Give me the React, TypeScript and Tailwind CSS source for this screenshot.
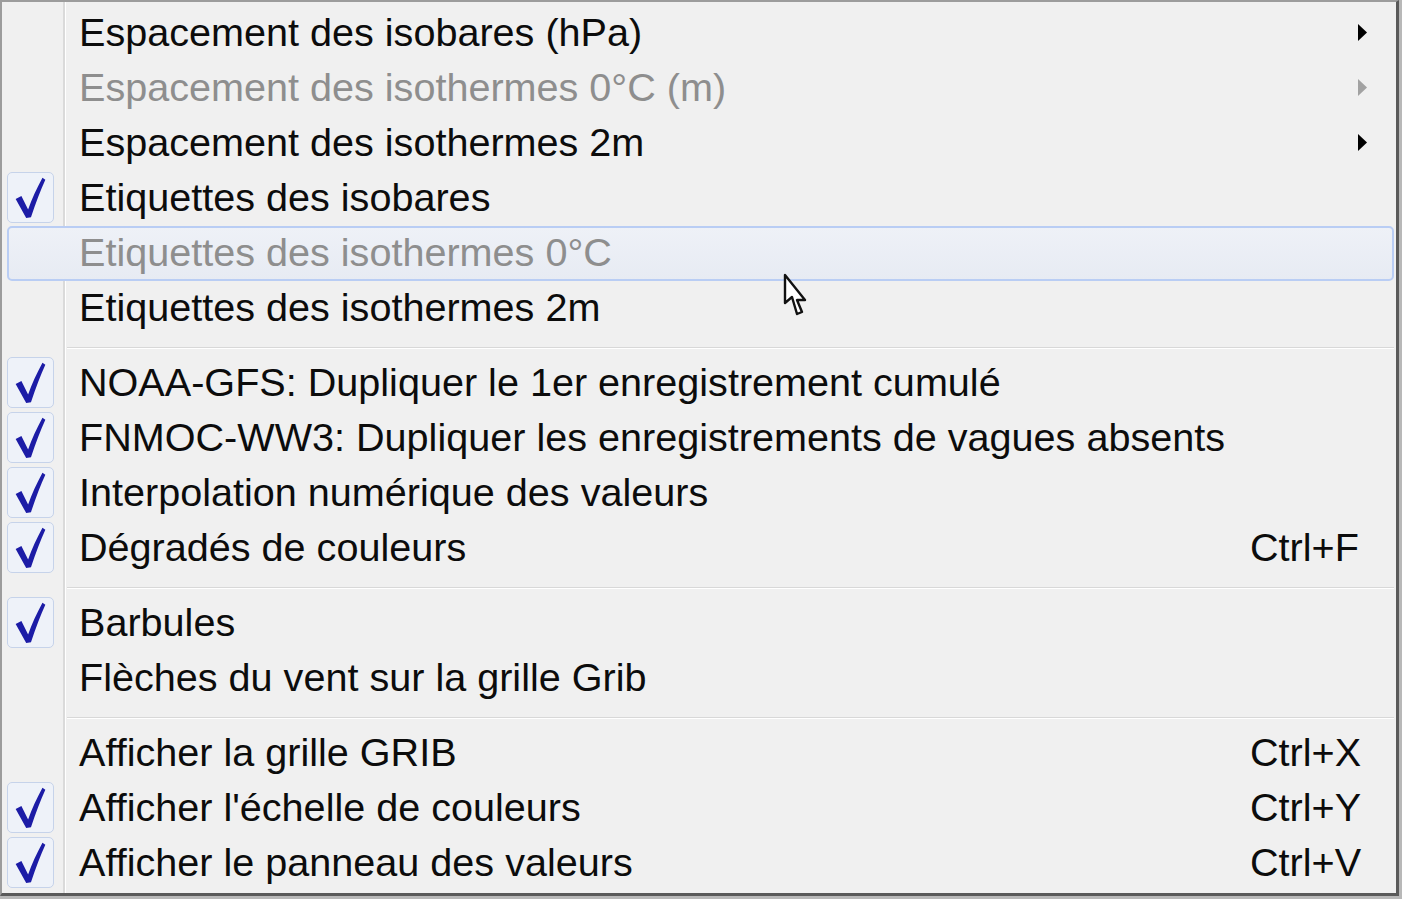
import React from "react";

type Item =
  | { kind: "sep" }
  | {
      kind: "item";
      label: string;
      checked?: boolean;
      disabled?: boolean;
      submenu?: boolean;
      shortcut?: string;
      hover?: boolean;
    };

const items: Item[] = [
  { kind: "item", label: "Espacement des isobares (hPa)", submenu: true },
  { kind: "item", label: "Espacement des isothermes 0°C (m)", submenu: true, disabled: true },
  { kind: "item", label: "Espacement des isothermes 2m", submenu: true },
  { kind: "item", label: "Etiquettes des isobares", checked: true },
  { kind: "item", label: "Etiquettes des isothermes 0°C", disabled: true, hover: true },
  { kind: "item", label: "Etiquettes des isothermes 2m" },
  { kind: "sep" },
  { kind: "item", label: "NOAA-GFS: Dupliquer le 1er enregistrement cumulé", checked: true },
  { kind: "item", label: "FNMOC-WW3: Dupliquer les enregistrements de vagues absents", checked: true },
  { kind: "item", label: "Interpolation numérique des valeurs", checked: true },
  { kind: "item", label: "Dégradés de couleurs", checked: true, shortcut: "Ctrl+F" },
  { kind: "sep" },
  { kind: "item", label: "Barbules", checked: true },
  { kind: "item", label: "Flèches du vent sur la grille Grib" },
  { kind: "sep" },
  { kind: "item", label: "Afficher la grille GRIB", shortcut: "Ctrl+X" },
  { kind: "item", label: "Afficher l'échelle de couleurs", checked: true, shortcut: "Ctrl+Y" },
  { kind: "item", label: "Afficher le panneau des valeurs", checked: true, shortcut: "Ctrl+V" },
];

function Check() {
  return (
    <div className="w-[47px] h-[51px] rounded-[5px] border-[1.5px] border-[#c6d3ea] bg-[#eef2f9] flex items-center justify-center">
      <svg width="47" height="51" viewBox="0 0 47 51">
        <path
          d="M8 27 L14 24 L21 38 C25 27 30 16 36 5 L39 7 C34 18 29 31 24 46 L19 47 Z"
          fill="#1c1ca6"
        />
      </svg>
    </div>
  );
}

function Arrow({ disabled }: { disabled?: boolean }) {
  return (
    <svg width="10" height="17" viewBox="0 0 10 17" className="mr-[28px]">
      <path d="M0 0 L9 8.5 L0 17 Z" fill={disabled ? "#a2a2a2" : "#000"} />
    </svg>
  );
}

export default function App() {
  return (
    <div className="w-[1402px] h-[899px] bg-[#b8b8b8]" style={{ fontFamily: '"Liberation Sans", Arial, sans-serif' }}>
      <div className="relative w-[1399px] h-[896px] border-t-2 border-l-2 border-r-[3px] border-b-[3px] border-t-[#9c9c9c] border-l-[#9c9c9c] border-r-[#5a5a5a] border-b-[#5a5a5a] pt-[3px] bg-[linear-gradient(to_right,#f0f0f0_61px,#dadada_61px,#dadada_63px,#ffffff_63px,#ffffff_64px,#f0f0f0_64px)]">
        {items.map((it, i) =>
          it.kind === "sep" ? (
            <div key={i} className="h-[20px] pt-[12px] pl-[65px] pr-[2px]">
              <div className="h-[1px] bg-[#d8d8d8]" />
              <div className="h-[1px] bg-[#ffffff]" />
            </div>
          ) : (
            <div key={i} className="relative h-[55px] flex items-center">
              {it.hover && (
                <div className="absolute left-[5px] right-[2px] top-[1px] bottom-[-1px] rounded-[5px] border-2 border-[#b9cdf4] bg-[linear-gradient(to_bottom,#eef1f7,#e7ebf3)]" />
              )}
              <div className="relative w-[77px] h-[55px] pl-[5px] flex items-center shrink-0">
                {it.checked && <Check />}
              </div>
              <div
                className={`relative w-[1171px] shrink-0 text-[39.6px] leading-[55px] whitespace-nowrap ${
                  it.disabled ? "text-[#8e8e8e]" : "text-[#0c0c0c]"
                }`}
              >
                {it.label}
              </div>
              <div className="relative flex-1 flex items-center h-[55px]">
                {it.shortcut && (
                  <span className="text-[39.6px] leading-[55px] text-[#0c0c0c] whitespace-nowrap">{it.shortcut}</span>
                )}
                {it.submenu && (
                  <div className="ml-auto flex items-center">
                    <Arrow disabled={it.disabled} />
                  </div>
                )}
              </div>
            </div>
          )
        )}
        <svg
          className="absolute left-[780px] top-[269px]"
          width="28"
          height="48"
          viewBox="-2 -2 28 48"
        >
          <path
            d="M1 2 L1 30 L8 24 L13 41 L18 39 L13 27 L21 27 Z"
            fill="#ffffff"
            stroke="#111"
            strokeWidth="2.4"
            strokeLinejoin="round"
          />
        </svg>
      </div>
    </div>
  );
}
